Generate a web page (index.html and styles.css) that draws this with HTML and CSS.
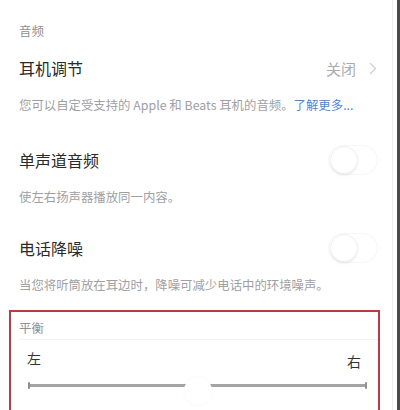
FILE: index.html
```html
<!DOCTYPE html>
<html lang="zh-CN">
<head>
<meta charset="utf-8">
<link rel="stylesheet" href="styles.css">
</head>
<body>
<div class="page">
  <div class="screen">
    <div class="section-title">音频</div>
    <div class="row">
      <span class="label">耳机调节</span>
      <span class="value">关闭<svg class="chev" width="8" height="13" viewBox="0 0 8 13"><path d="M1.5 1.5 L6.5 6.5 L1.5 11.5" fill="none" stroke="#cfcfd3" stroke-width="1.3" stroke-linecap="round" stroke-linejoin="round"/></svg></span>
    </div>
    <div class="desc gap-a">您可以自定受支持的 Apple 和 Beats 耳机的音频。<span class="link">了解更多...</span></div>
    <div class="row">
      <span class="label">单声道音频</span>
      <span class="toggle"><span class="knob"></span></span>
    </div>
    <div class="desc gap-b">使左右扬声器播放同一内容。</div>
    <div class="row">
      <span class="label">电话降噪</span>
      <span class="toggle"><span class="knob"></span></span>
    </div>
    <div class="desc gap-c">当您将听筒放在耳边时，降噪可减少电话中的环境噪声。</div>
    <div class="balance">
      <div class="balance-title">平衡</div>
      <div class="lr">
        <span class="lr-left">左</span>
        <span class="lr-right">右</span>
      </div>
      <div class="slider">
        <span class="cap"></span>
        <span class="track"></span>
        <span class="cap"></span>
        <span class="thumb"></span>
      </div>
    </div>
  </div>
  <div class="gutter"></div>
  <div class="edge"></div>
</div>
</body>
</html>
```
FILE: styles.css
```css
html, body {
  margin: 0;
  padding: 0;
  background: #ffffff;
  font-family: "Noto Sans CJK SC", "Noto Sans", sans-serif;
  overflow: hidden;
}
.page {
  display: flex;
  width: 400px;
  height: 410px;
  overflow: hidden;
}
.screen {
  width: 392px;
  border-right: 1px solid #ececec;
  flex: none;
}
.gutter {
  width: 4px;
  flex: none;
}
.edge {
  width: 3px;
  flex: none;
  background: #4a4a4a;
}
.section-title {
  height: 44px;
  box-sizing: border-box;
  padding: 24px 0 0 19px;
  font-size: 12.4px;
  line-height: 14px;
  color: #909094;
}
.row {
  height: 48px;
  display: flex;
  align-items: center;
  justify-content: space-between;
  padding: 0 15px 0 19px;
}
.label {
  font-size: 16px;
  color: #2a2a2a;
}
.value {
  font-size: 15px;
  color: #ababaf;
  display: flex;
  align-items: center;
  gap: 13px;
  padding-right: 0;
}
.chev {
  display: block;
}
.desc {
  height: 26px;
  line-height: 26px;
  padding-left: 19px;
  font-size: 12.4px;
  color: #a0a0a4;
  white-space: nowrap;
}
.link {
  color: #4a86ec;
}
.gap-a { margin-bottom: 18px; }
.gap-b { margin-bottom: 14px; }
.gap-c { margin-bottom: 12px; }
.toggle {
  width: 50px;
  height: 30px;
  box-sizing: border-box;
  border: 1px solid #f6f6f6;
  border-radius: 15px;
  background: #fff;
  position: relative;
  margin-right: -1px;
}
.knob {
  position: absolute;
  left: 1px;
  top: 0px;
  width: 28px;
  height: 28px;
  border-radius: 50%;
  background: #fff;
  border: 1px solid #efefef;
  box-shadow: 0 2px 2px rgba(0, 0, 0, 0.06);
  box-sizing: border-box;
}
.balance {
  margin-left: 9px;
  width: 371px;
  height: 120px;
  box-sizing: border-box;
  border: 2px solid #bb3a43;
  border-bottom: none;
  padding: 9px 0 0 8px;
  position: relative;
}
.balance-title {
  font-size: 12.4px;
  line-height: 14px;
  color: #909094;
  padding-bottom: 4px;
  border-bottom: 1px solid #f2f2f2;
}
.lr {
  display: flex;
  justify-content: space-between;
  padding: 8px 17px 0 8px;
  font-size: 14px;
  line-height: 20px;
  color: #333;
}
.lr-right {
  padding-top: 3px;
}
.slider {
  position: relative;
  display: flex;
  align-items: center;
  margin: 10px 0 0 9px;
  width: 339px;
  height: 8px;
}
.track {
  flex: 1;
  height: 3px;
  background: #a3a3a3;
}
.cap {
  width: 2px;
  height: 7px;
  background: #8e8e8e;
  border-radius: 1px;
}
.thumb {
  position: absolute;
  left: 156px;
  top: -4px;
  width: 28px;
  height: 28px;
  border-radius: 50%;
  background: #fff;
  box-shadow: 0 0 2px rgba(0, 0, 0, 0.06);
}
```
